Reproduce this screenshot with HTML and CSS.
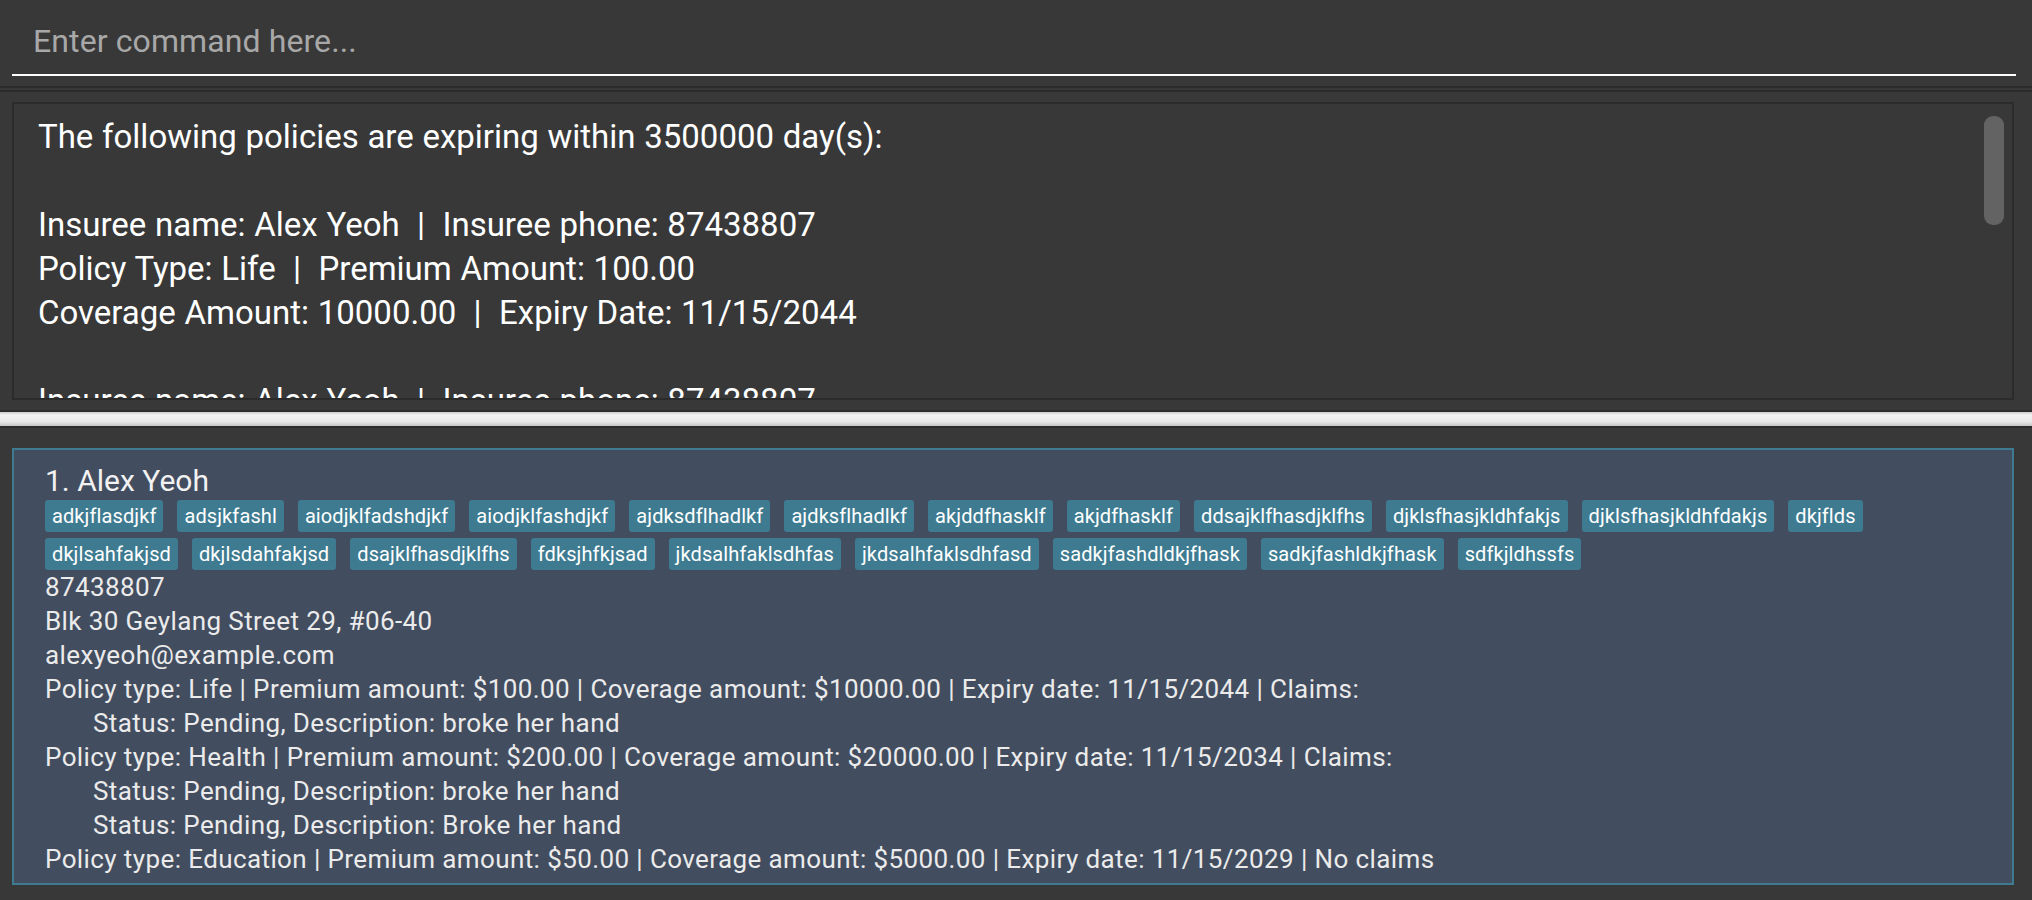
FILE: index.html
```html
<!DOCTYPE html>
<html lang="en">
<head>
<meta charset="utf-8">
<title>Insurance Manager</title>
<link rel="stylesheet" href="styles.css">
</head>
<body>
<div class="app">
  <div class="command-box">
    <input class="command-input" type="text" placeholder="Enter command here...">
  </div>
  <div class="divider-thin"></div>
  <div class="result-box">
    <div class="result-text">The following policies are expiring within 3500000 day(s):

Insuree name: Alex Yeoh  |  Insuree phone: 87438807
Policy Type: Life  |  Premium Amount: 100.00
Coverage Amount: 10000.00  |  Expiry Date: 11/15/2044

Insuree name: Alex Yeoh  |  Insuree phone: 87438807
Policy Type: Health  |  Premium Amount: 200.00
Coverage Amount: 20000.00  |  Expiry Date: 11/15/2034

Insuree name: Alex Yeoh  |  Insuree phone: 87438807
Policy Type: Education  |  Premium Amount: 50.00
Coverage Amount: 5000.00  |  Expiry Date: 11/15/2029</div>
    <div class="scroll-thumb"></div>
  </div>
  <div class="split-divider"></div>
  <div class="list-panel">
    <div class="person-card">
      <div class="person-name">1. Alex Yeoh</div>
      <div class="tags">
        <span class="tag">adkjflasdjkf</span>
        <span class="tag">adsjkfashl</span>
        <span class="tag">aiodjklfadshdjkf</span>
        <span class="tag">aiodjklfashdjkf</span>
        <span class="tag">ajdksdflhadlkf</span>
        <span class="tag">ajdksflhadlkf</span>
        <span class="tag">akjddfhasklf</span>
        <span class="tag">akjdfhasklf</span>
        <span class="tag">ddsajklfhasdjklfhs</span>
        <span class="tag">djklsfhasjkldhfakjs</span>
        <span class="tag">djklsfhasjkldhfdakjs</span>
        <span class="tag">dkjflds</span>
        <span class="tag">dkjlsahfakjsd</span>
        <span class="tag">dkjlsdahfakjsd</span>
        <span class="tag">dsajklfhasdjklfhs</span>
        <span class="tag">fdksjhfkjsad</span>
        <span class="tag">jkdsalhfaklsdhfas</span>
        <span class="tag">jkdsalhfaklsdhfasd</span>
        <span class="tag">sadkjfashdldkjfhask</span>
        <span class="tag">sadkjfashldkjfhask</span>
        <span class="tag">sdfkjldhssfs</span>
      </div>
      <div class="details">
        <div class="line">87438807</div>
        <div class="line">Blk 30 Geylang Street 29, #06-40</div>
        <div class="line">alexyeoh@example.com</div>
        <div class="line">Policy type: Life | Premium amount: $100.00 | Coverage amount: $10000.00 | Expiry date: 11/15/2044 | Claims:</div>
        <div class="line claim">Status: Pending, Description: broke her hand</div>
        <div class="line">Policy type: Health | Premium amount: $200.00 | Coverage amount: $20000.00 | Expiry date: 11/15/2034 | Claims:</div>
        <div class="line claim">Status: Pending, Description: broke her hand</div>
        <div class="line claim">Status: Pending, Description: Broke her hand</div>
        <div class="line">Policy type: Education | Premium amount: $50.00 | Coverage amount: $5000.00 | Expiry date: 11/15/2029 | No claims</div>
      </div>
    </div>
  </div>
</div>
</body>
</html>
```

FILE: styles.css
```css
html, body {
  margin: 0;
  padding: 0;
  background: #383838;
}

body {
  font-family: Roboto, "Liberation Sans", sans-serif;
  width: 2032px;
  height: 900px;
  overflow: hidden;
}

.app {
  display: flex;
  flex-direction: column;
  height: 900px;
}

.command-box {
  height: 76px;
  padding: 0 16px 0 12px;
}

.command-input {
  box-sizing: border-box;
  display: block;
  width: 100%;
  height: 76px;
  margin: 0;
  padding: 8px 0 0 21px;
  border: none;
  border-bottom: 2px solid #ffffff;
  background: transparent;
  font-family: Roboto, "Liberation Sans", sans-serif;
  font-size: 32px;
  letter-spacing: 0.1px;
  color: #ffffff;
  outline: none;
}

.command-input::placeholder {
  color: #a8a8a8;
}

.divider-thin {
  margin-top: 10px;
  height: 2px;
  border-top: 2px solid #2b2b2b;
  border-bottom: 2px solid #2b2b2b;
}

.result-box {
  position: relative;
  box-sizing: border-box;
  margin: 10px 18px 0 12px;
  height: 298px;
  border: 2px solid #2b2b2b;
  overflow: hidden;
}

.result-text {
  padding: 11px 0 0 24px;
  font-size: 33px;
  line-height: 44px;
  word-spacing: 0.5px;
  color: #ffffff;
  white-space: pre-wrap;
}

.scroll-thumb {
  position: absolute;
  top: 12px;
  left: 1970px;
  width: 20px;
  height: 109px;
  border-radius: 9px;
  background: #636363;
}

.split-divider {
  margin-top: 10px;
  height: 14px;
  border-top: 2px solid #2b2b2b;
  border-bottom: 2px solid #2b2b2b;
  background: linear-gradient(#c8c8c8 0, #f2f2f2 3px, #e6e6e6 10px, #c4c4c4 14px);
}

.list-panel {
  padding: 20px 18px 0 12px;
}

.person-card {
  box-sizing: border-box;
  height: 437px;
  border: 2px solid #3e7b91;
  background: #424d5f;
  padding: 13px 60px 0 31px;
  color: #ebebeb;
}

.person-name {
  font-size: 30px;
  line-height: 35px;
  color: #f2f2f2;
}

.tags {
  margin-top: 2px;
  display: flex;
  flex-wrap: wrap;
  column-gap: 14px;
  row-gap: 6px;
}

.tag {
  background: #3e7b91;
  color: #ffffff;
  font-size: 20px;
  line-height: 32px;
  padding: 0 7px;
  letter-spacing: 0.1px;
  border-radius: 3px;
}

.details {
  font-size: 26px;
  line-height: 34px;
  letter-spacing: 0.4px;
}

.claim {
  padding-left: 48px;
}
```
